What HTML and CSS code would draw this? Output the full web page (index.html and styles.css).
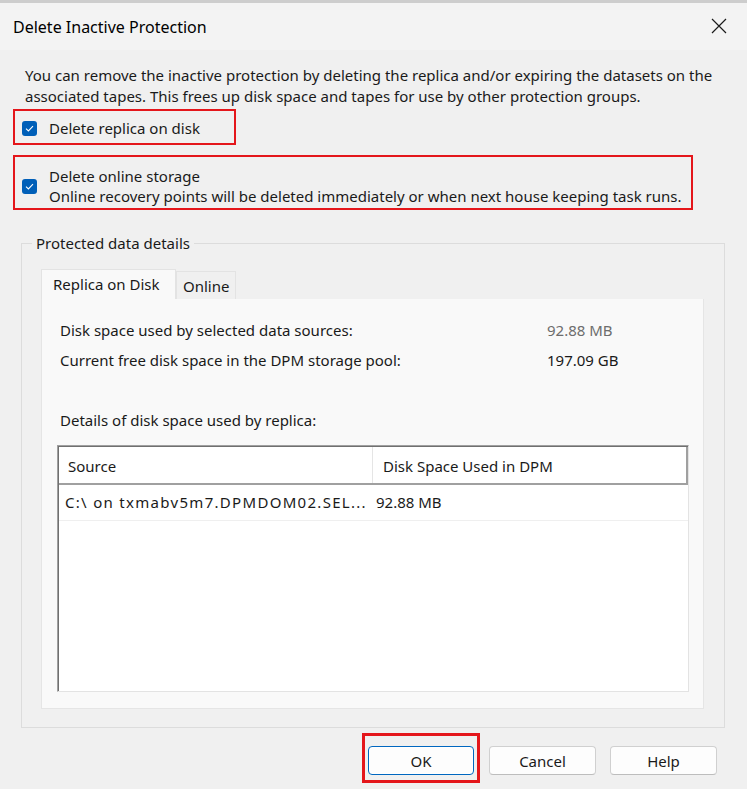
FILE: index.html
```html
<!DOCTYPE html>
<html>
<head>
  <title>Delete Inactive Protection</title>
  <link rel="stylesheet" href="styles.css">
</head>
<body>
  <div class="window">
    <div class="titlebar">
      <span class="title">Delete Inactive Protection</span>
      <svg class="close" width="16" height="16" viewBox="0 0 16 16">
        <path d="M1 1 L15 15 M15 1 L1 15" stroke="#1a1a1a" stroke-width="1.2" fill="none"/>
      </svg>
    </div>

    <div class="content">
      <p class="intro">You can remove the inactive protection by deleting the replica and/or expiring the datasets on the associated tapes. This frees up disk space and tapes for use by other protection groups.</p>

      <!-- checkboxes, each marked with a red box -->
      <div class="mark mark-replica">
        <label class="check">
          <span class="box">
            <svg width="15" height="15" viewBox="0 0 15 15"><path d="M4 7.6 L6.4 10 L11 5.2" stroke="#fff" stroke-width="1.1" fill="none"/></svg>
          </span>
          <span>Delete replica on disk</span>
        </label>
      </div>

      <div class="mark mark-online">
        <label class="check">
          <span class="box">
            <svg width="15" height="15" viewBox="0 0 15 15"><path d="M4 7.6 L6.4 10 L11 5.2" stroke="#fff" stroke-width="1.1" fill="none"/></svg>
          </span>
          <span class="check-text">Delete online storage<br>Online recovery points will be deleted immediately or when next house keeping task runs.</span>
        </label>
      </div>

      <div class="group">
        <span class="group-title">Protected data details</span>

        <div class="tabs">
          <div class="tab active">Replica on Disk</div>
          <div class="tab">Online</div>
        </div>

        <div class="panel">
          <div class="stats">
            <span>Disk space used by selected data sources:</span>
            <span class="muted">92.88 MB</span>
            <span>Current free disk space in the DPM storage pool:</span>
            <span>197.09 GB</span>
          </div>

          <p class="details">Details of disk space used by replica:</p>

          <div class="list">
            <div class="list-head">
              <div class="col-source">Source</div>
              <div class="col-size">Disk Space Used in DPM</div>
            </div>
            <div class="list-row">
              <div class="cell-source">C:\ on txmabv5m7.DPMDOM02.SEL...</div>
              <div class="cell-size">92.88 MB</div>
            </div>
          </div>
        </div>
      </div>

      <div class="buttons">
        <span class="ok-mark"><button class="btn default">OK</button></span>
        <button class="btn">Cancel</button>
        <button class="btn">Help</button>
      </div>
    </div>
  </div>
</body>
</html>
```

FILE: styles.css
```css
/* dialog look */
body {
  margin: 0;
  padding: 0;
  background-color: #f0f0f0;
  font-family: "Noto Sans", "Liberation Sans", sans-serif;
  font-size: 15px;
  color: #1a1a1a;
}
.window {
  width: 747px;
  height: 789px;
  border-top: 3px solid #cdcdcd;
  box-sizing: border-box;
  overflow: hidden;
}
.titlebar {
  height: 47px;
  background-color: #f3f3f3;
  display: flex;
  align-items: center;
  justify-content: space-between;
  padding: 0 20px 0 13px;
}
.title {
  font-size: 16px;
  color: #000;
}
.close {
  margin-top: -1px;
}
.content {
  padding: 15px 0 0 0;
}
.intro {
  margin: 0 0 0 25px;
  width: 700px;
  line-height: 21px;
}
/* red annotation boxes */
.mark {
  border: 2px solid #e4161b;
  margin-left: 13px;
  box-sizing: border-box;
}
.mark-replica {
  width: 223px;
  height: 36px;
  margin-top: 2px;
  padding: 7px 0 0 7px;
}
.mark-online {
  width: 680px;
  height: 55px;
  margin-top: 10px;
  padding: 9px 0 0 7px;
}
.check {
  display: flex;
  align-items: center;
  gap: 12px;
  line-height: 20px;
}
.box {
  width: 15px;
  height: 15px;
  background-color: #005fb8;
  border-radius: 3px;
  display: flex;
  flex-shrink: 0;
}
/* group box */
.group {
  position: relative;
  margin: 33px 22px 0 21px;
  border: 1px solid #dcdcdc;
  padding: 25px 20px 18px 19px;
}
.group-title {
  position: absolute;
  top: -11px;
  left: 10px;
  padding: 0 4px;
  background-color: #f0f0f0;
  line-height: 20px;
}
.tabs {
  display: flex;
  align-items: flex-end;
}
.tab {
  border: 1px solid #e3e3e3;
  border-bottom: none;
  height: 28px;
  line-height: 28px;
  padding: 0 6px;
  box-sizing: border-box;
  background-color: #f0f0f0;
}
.tab.active {
  height: 30px;
  line-height: 28px;
  width: 135px;
  padding: 0 11px;
  background-color: #f9f9f9;
}
.panel {
  background-color: #f9f9f9;
  border: 1px solid #e5e5e5;
  border-top: none;
  height: 410px;
  box-sizing: border-box;
  padding: 16px 15px 0 15px;
}
.stats {
  display: grid;
  grid-template-columns: 487px auto;
  line-height: 30px;
  padding-left: 3px;
}
.muted {
  color: #6d6d6d;
}
.details {
  margin: 35px 0 0 3px;
  line-height: 20px;
}
.list {
  margin-top: 15px;
  width: 632px;
  height: 247px;
  box-sizing: border-box;
  background-color: #fff;
  border: 1px solid;
  border-color: #a0a0a0 #e3e3e3 #e3e3e3 #a0a0a0;
  box-shadow: inset 1px 1px 0 #707070;
}
.list-head {
  display: flex;
  height: 38px;
  box-sizing: border-box;
  margin: 1px 0 0 1px;
  border-bottom: 2px solid #a0a0a0;
  border-right: 2px solid #a0a0a0;
  line-height: 38px;
}
.col-source {
  width: 304px;
  padding-left: 9px;
  border-right: 1px solid #e5e5e5;
}
.col-size {
  padding-left: 10px;
}
.list-row {
  display: flex;
  height: 35px;
  line-height: 34px;
  border-bottom: 1px solid #efefef;
  margin-left: 1px;
}
.cell-source {
  width: 311px;
  padding-left: 6px;
  letter-spacing: 1.3px;
  white-space: nowrap;
}
/* buttons */
.buttons {
  display: flex;
  justify-content: flex-end;
  gap: 14px;
  margin: 18px 30px 0 0;
}
.btn {
  width: 107px;
  height: 29px;
  font-family: "Noto Sans", "Liberation Sans", sans-serif;
  font-size: 15px;
  color: #1a1a1a;
  background-color: #fdfdfd;
  border: 1px solid #d0d0d0;
  border-bottom-color: #bdbdbd;
  border-radius: 4px;
  padding: 0;
}
.btn.default {
  border: 1px solid #0067c0;
  box-shadow: inset 0 0 0 1px #ffffff;
  width: 106px;
}
.ok-mark {
  position: relative;
  display: flex;
  margin-right: 1px;
}
.ok-mark::after {
  content: "";
  position: absolute;
  top: -13px;
  left: -6px;
  right: -6px;
  bottom: -8px;
  border: 3px solid #e4161b;
}
```
